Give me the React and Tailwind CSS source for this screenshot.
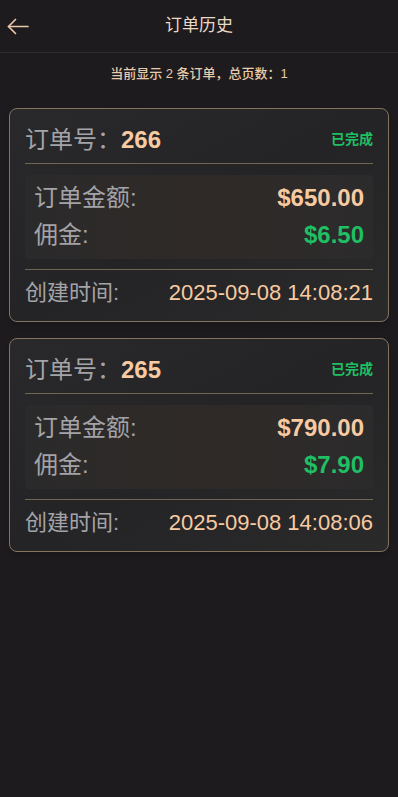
import React from "react";

const orders = [
  { id: 266, amount: "$650.00", commission: "$6.50", createdAt: "2025-09-08 14:08:21" },
  { id: 265, amount: "$790.00", commission: "$7.90", createdAt: "2025-09-08 14:08:06" },
];

const font = { fontFamily: '"Liberation Sans", Arial, "Noto Sans CJK SC", sans-serif' };

function BackArrow() {
  return (
    <svg width="22" height="17" viewBox="0 0 22 17" fill="none" stroke="currentColor" strokeWidth="1.7" strokeLinecap="round" strokeLinejoin="round">
      <path d="M21 8.5H1.5" />
      <path d="M8.5 1.5 1.5 8.5l7 7" />
    </svg>
  );
}

function OrderCard({ order }) {
  return (
    <div className="rounded-lg border border-[#83745e] bg-gradient-to-br from-[#29292b] via-[#242325] to-[#2b2a2b] px-[15px] pt-[15px] pb-[12px] shadow-md">
      {/* header */}
      <div className="flex items-center justify-between border-b border-[#716553] pb-[7px]">
        <div className="flex h-[32px] items-center text-[24px]">
          <span className="text-[#a3a3a8]">订单号：</span>
          <span className="font-bold text-[#f7caa2]">{order.id}</span>
        </div>
        <span className="text-[14px] font-bold text-[#1fbf63]">已完成</span>
      </div>

      {/* amounts */}
      <div className="mt-[11px] rounded bg-gradient-to-r from-[#2b2a2b] via-[#2f2a27] to-[#2c2b2c] px-[9px] py-[5px] text-[24px]">
        <div className="flex h-[37px] items-center justify-between">
          <span className="text-[#a3a3a8]">订单金额:</span>
          <span className="font-bold text-[#f7caa2]">{order.amount}</span>
        </div>
        <div className="flex h-[37px] items-center justify-between">
          <span className="text-[#a3a3a8]">佣金:</span>
          <span className="font-bold text-[#1fbf63]">{order.commission}</span>
        </div>
      </div>

      {/* time */}
      <div className="mt-[10px] flex h-[40px] items-center justify-between border-t border-[#716553] pt-[6px] text-[22px]">
        <span className="text-[#a3a3a8]">创建时间:</span>
        <span className="text-[#f7caa2]">{order.createdAt}</span>
      </div>
    </div>
  );
}

export default function App() {
  return (
    <div className="min-h-[797px] bg-[#1d1b1e]" style={font}>
      <div className="relative flex h-[53px] items-center justify-center border-b border-[#2e2c2f]">
        <button className="absolute left-[7px] top-[18px] text-[#e9c6a6]">
          <BackArrow />
        </button>
        <h1 className="text-[17px] text-[#ecd9c6]">订单历史</h1>
      </div>

      <p className="mt-[11px] text-center text-[13px] font-medium text-[#e8cba9]">
        当前显示 2 条订单，总页数：1
      </p>

      <div className="mt-[24px] space-y-4 px-[9px]">
        {orders.map((order) => (
          <OrderCard key={order.id} order={order} />
        ))}
      </div>
    </div>
  );
}
